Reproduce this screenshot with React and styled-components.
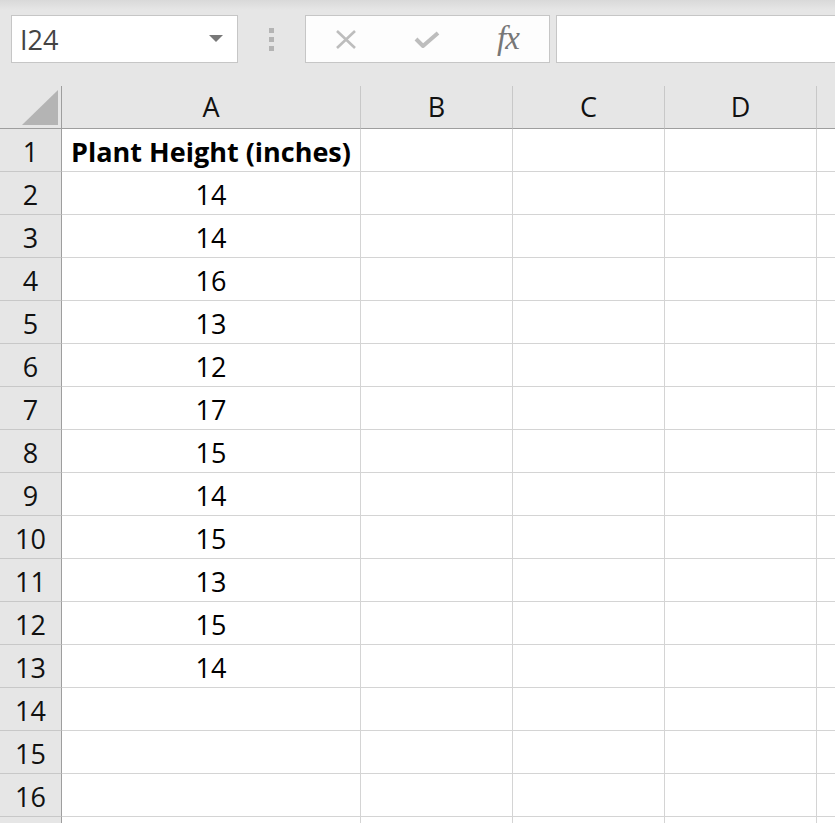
import { Fragment } from "react";
import styled, { createGlobalStyle } from "styled-components";

const GlobalStyle = createGlobalStyle`
  html, body {
    margin: 0;
    padding: 0;
    background: #ffffff;
    overflow: hidden;
  }
  * {
    box-sizing: border-box;
  }
`;

const Window = styled.div`
  width: 835px;
  height: 823px;
  overflow: hidden;
  font-family: "Open Sans", "Noto Sans", sans-serif;
`;

const FormulaBar = styled.div`
  height: 86px;
  display: flex;
  align-items: flex-start;
  padding: 15px 0 0 11px;
  background: linear-gradient(#d9d9d9 0px, #e6e6e6 10px, #e6e6e6 100%);
`;

const NameBox = styled.div`
  position: relative;
  width: 227px;
  height: 48px;
  background: #ffffff;
  border: 1px solid #c6c6c6;
  display: flex;
  align-items: center;
  padding-left: 8px;
  font-size: 27px;
  color: #444444;
`;

const DropArrow = styled.span`
  position: absolute;
  right: 14px;
  top: 19px;
  width: 0;
  height: 0;
  border-left: 7px solid transparent;
  border-right: 7px solid transparent;
  border-top: 7px solid #787878;
`;

const Grip = styled.div`
  width: 67px;
  height: 48px;
  display: flex;
  flex-direction: column;
  align-items: center;
  justify-content: center;
  gap: 4px;
`;

const GripDot = styled.span`
  width: 5px;
  height: 5px;
  background: #b4b4b4;
`;

const ButtonBox = styled.div`
  width: 245px;
  height: 48px;
  background: #fdfdfd;
  border: 1px solid #c6c6c6;
  display: flex;
  align-items: center;
  padding-left: 29px;
  gap: 57px;
`;

const FxLabel = styled.span`
  font-family: "Liberation Serif", serif;
  font-style: italic;
  font-size: 33px;
  line-height: 1;
  color: #777777;
  letter-spacing: -1px;
  margin-top: -2px;
`;

const FormulaInput = styled.div`
  flex: 1;
  height: 48px;
  margin-left: 6px;
  margin-right: -4px;
  background: #ffffff;
  border: 1px solid #c6c6c6;
`;

const Sheet = styled.div`
  display: grid;
  grid-template-columns: 62px 299px 152px 152px 152px 152px;
  grid-auto-rows: 43px;
`;

const Cell = styled.div`
  display: flex;
  align-items: flex-end;
  justify-content: center;
  padding-bottom: 1px;
  background: #ffffff;
  border-right: 1px solid #d4d4d4;
  border-bottom: 1px solid #d4d4d4;
  font-size: 27px;
  font-weight: ${(p) => (p.$bold ? 700 : 400)};
  color: #000000;
  white-space: nowrap;
`;

const ColHead = styled(Cell)`
  padding-bottom: 3px;
  background: #e6e6e6;
  border-right-color: #c8c8c8;
  border-bottom-color: #9e9e9e;
  color: #111111;
`;

const RowHead = styled(Cell)`
  background: #e6e6e6;
  border-right-color: #9e9e9e;
  border-bottom-color: #c8c8c8;
  color: #111111;
`;

const Corner = styled(ColHead)`
  border-right-color: #9e9e9e;
  justify-content: flex-end;
  padding: 0 3px 3px 0;
`;

const columns = ["A", "B", "C", "D", "E"];
const heights = [14, 14, 16, 13, 12, 17, 15, 14, 15, 13, 15, 14];

const rows = [
  { label: "1", cells: ["Plant Height (inches)"], bold: true },
  ...heights.map((h, i) => ({ label: String(i + 2), cells: [String(h)] })),
  { label: "14", cells: [] },
  { label: "15", cells: [] },
  { label: "16", cells: [] },
  // row 17 only peeks in at the bottom edge, its label is out of view
  { label: "", cells: [] },
];

export default function App() {
  return (
    <Window>
      <GlobalStyle />
      <FormulaBar>
        <NameBox>
          I24
          <DropArrow />
        </NameBox>
        <Grip>
          <GripDot />
          <GripDot />
          <GripDot />
        </Grip>
        <ButtonBox>
          <svg width="22" height="19" viewBox="0 0 22 19">
            <path d="M2 1 L20 18 M20 1 L2 18" stroke="#bdbdbd" strokeWidth="2.6" fill="none" />
          </svg>
          <svg width="26" height="17" viewBox="0 0 26 17">
            <path d="M2 8 L9 15 L24 2" stroke="#bdbdbd" strokeWidth="4" fill="none" strokeLinejoin="round" />
          </svg>
          <FxLabel>fx</FxLabel>
        </ButtonBox>
        <FormulaInput />
      </FormulaBar>
      <Sheet>
        <Corner>
          <svg width="36" height="35" viewBox="0 0 36 35">
            <polygon points="36,0 36,35 0,35" fill="#b4b4b4" />
          </svg>
        </Corner>
        {columns.map((c) => (
          <ColHead key={c}>{c === "E" ? "" : c}</ColHead>
        ))}
        {rows.map((row, i) => (
          <Fragment key={i}>
            <RowHead>{row.label}</RowHead>
            {columns.map((c, j) => (
              <Cell key={c} $bold={row.bold}>
                {row.cells[j] || ""}
              </Cell>
            ))}
          </Fragment>
        ))}
      </Sheet>
    </Window>
  );
}
